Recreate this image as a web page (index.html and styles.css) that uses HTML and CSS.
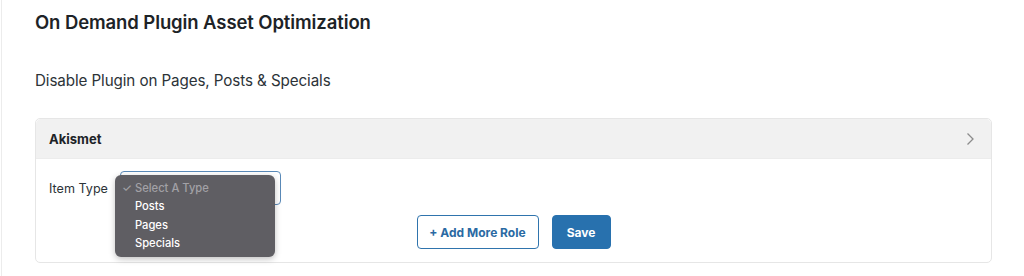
FILE: index.html
```html
<!doctype html>
<html lang="en">
<head>
    <meta charset="UTF-8">
    <meta name="viewport" content="width=device-width, initial-scale=1.0">
    <title>On Demand Plugin Asset Optimization</title>
    <link rel="stylesheet" href="styles.css">
</head>
<body>
<div class="wrap">
    <h2 class="page_title">On Demand Plugin Asset Optimization</h2>
    <p class="page_sub">Disable Plugin on Pages, Posts &amp; Specials</p>

    <div class="plugin_card">
        <div class="plugin_head">
            <span class="plugin_name">Akismet</span>
            <svg class="chevron" width="10" height="14" viewBox="0 0 10 14">
                <path d="M2.5 1.5 L8 7 L2.5 12.5" fill="none" stroke="#8c8c8c" stroke-width="1.3"/>
            </svg>
        </div>
        <div class="plugin_body">
            <div class="item_row">
                <span class="item_label">Item Type</span>
                <div class="select_wrap">
                    <div class="select_box"></div>
                    <ul class="select_menu">
                        <li class="opt opt_placeholder"><span class="check">✓</span>Select A Type</li>
                        <li class="opt">Posts</li>
                        <li class="opt">Pages</li>
                        <li class="opt">Specials</li>
                    </ul>
                </div>
            </div>
            <div class="actions">
                <button class="btn btn_outline">+ Add More Role</button>
                <button class="btn btn_primary">Save</button>
            </div>
        </div>
    </div>
</div>
</body>
</html>
```

FILE: styles.css
```css
ul, li {
    margin: 0;
    padding: 0;
    list-style: none;
}

body {
    margin: 0;
    background: #fff;
    font-family: Inter, "Noto Sans", sans-serif;
    color: #1d2327;
}

.wrap {
    height: 276px;
    box-sizing: border-box;
    margin-left: 1px;
    border-left: 1px solid #ececec;
    padding: 10px 32px 0 33px;
}

.page_title {
    margin: 0;
    font-size: 18.5px;
    font-weight: 600;
    line-height: 24px;
    color: #1d2327;
    letter-spacing: -0.1px;
}

.page_sub {
    margin: 36px 0 0;
    font-size: 15.2px;
    line-height: 22px;
    color: #2c3338;
    letter-spacing: -0.1px;
}

.plugin_card {
    margin-top: 26px;
    border: 1px solid #e6e6e6;
    border-radius: 5px;
}

.plugin_head {
    height: 39px;
    background: #f1f1f1;
    border-bottom: 1px solid #ececec;
    border-radius: 5px 5px 0 0;
    display: flex;
    align-items: center;
    justify-content: space-between;
    padding: 0 16px 0 13px;
}

.plugin_name {
    font-size: 13px;
    font-weight: 700;
    color: #1d2327;
}

.chevron {
    display: block;
}

.plugin_body {
    padding: 12px 13px 13px;
}

.item_row {
    display: flex;
    align-items: center;
    height: 34px;
}

.item_label {
    font-size: 12.6px;
    color: #2c3338;
    margin-right: 12px;
}

.select_wrap {
    position: relative;
    width: 161px;
    height: 34px;
}

.select_box {
    box-sizing: border-box;
    height: 34px;
    border: 1px solid #5a8ab8;
    border-radius: 4px;
    background: #fff;
}

.select_menu {
    position: absolute;
    left: -5px;
    top: 4px;
    width: 160px;
    box-sizing: border-box;
    padding: 4px 0 5px;
    background: #5f5e63;
    border-radius: 6px;
    box-shadow: 0 2px 6px rgba(0, 0, 0, 0.25);
}

.opt {
    font-family: Inter, "Noto Sans", sans-serif;
    font-size: 11.2px;
    font-weight: 500;
    line-height: 18.3px;
    color: #fff;
    padding-left: 20px;
}

.opt_placeholder {
    color: #a2a1a6;
    padding-left: 7px;
}

.check {
    display: inline-block;
    width: 13px;
}

.actions {
    display: flex;
    justify-content: center;
    gap: 13px;
    margin-top: 10px;
}

.btn {
    font-family: Inter, "Noto Sans", sans-serif;
    font-size: 12px;
    font-weight: 700;
    height: 34px;
    border-radius: 4px;
    cursor: pointer;
}

.btn_outline {
    width: 122px;
    background: #fff;
    color: #2a6aa3;
    border: 1px solid #2f74ad;
}

.btn_primary {
    width: 59px;
    background: #2871ae;
    color: #fff;
    border: 1px solid #2871ae;
}
```
